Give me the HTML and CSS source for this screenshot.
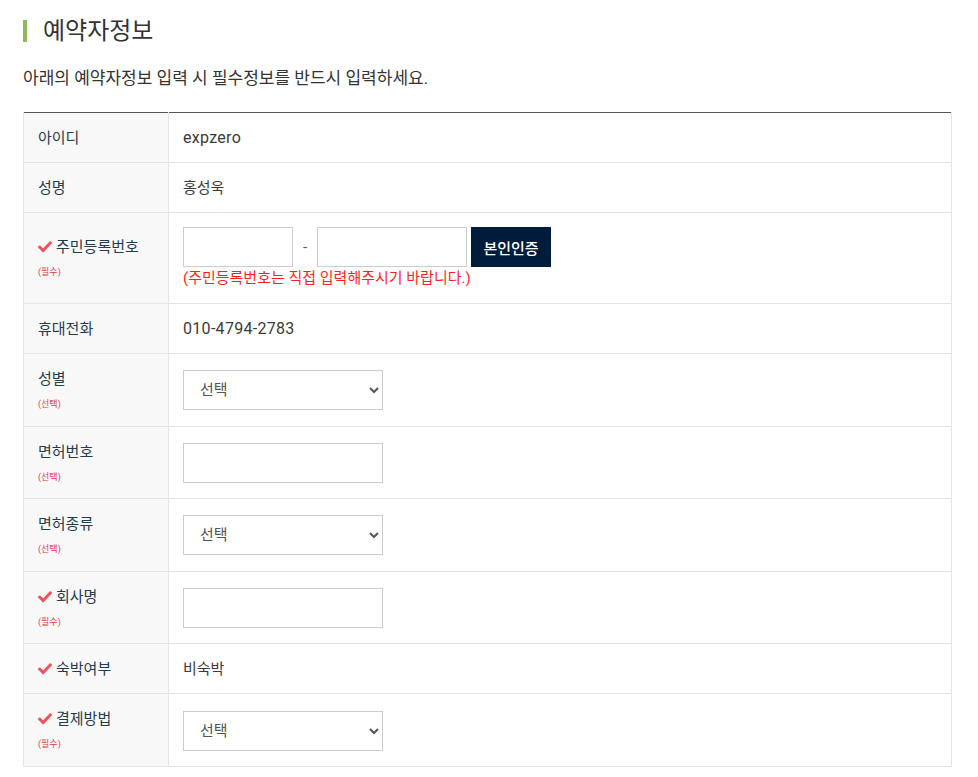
FILE: index.html
```html
<!DOCTYPE html>
<html lang="ko">
<head>
  <meta charset="UTF-8">
  <title>예약자정보</title>
  <link rel="stylesheet" href="styles.css">
</head>
<body>
  <div class="wrap">
    <h2 class="sec-title">예약자정보</h2>
    <p class="sec-desc">아래의 예약자정보 입력 시 필수정보를 반드시 입력하세요.</p>
    <table class="form-table">
      <colgroup>
        <col class="col-th">
        <col>
      </colgroup>
      <tr>
        <th>아이디</th>
        <td><span class="en">expzero</span></td>
      </tr>
      <tr>
        <th>성명</th>
        <td>홍성욱</td>
      </tr>
      <tr>
        <th>
          <span class="req"><svg class="chk" viewBox="0 0 14 12"><path d="M1.6 6 5.2 9.6 12.4 1.8"/></svg>주민등록번호</span>
          <span class="sub">(필수)</span>
        </th>
        <td>
          <div class="jumin">
            <input type="text" class="inp inp-s">
            <span class="dash">-</span>
            <input type="password" class="inp inp-m">
            <button type="button" class="btn-auth">본인인증</button>
          </div>
          <p class="warn">(주민등록번호는 직접 입력해주시기 바랍니다.)</p>
        </td>
      </tr>
      <tr>
        <th>휴대전화</th>
        <td><span class="en">010-4794-2783</span></td>
      </tr>
      <tr>
        <th>성별<span class="sub">(선택)</span></th>
        <td>
          <select class="sel">
            <option>선택</option>
            <option>남</option>
            <option>여</option>
          </select>
        </td>
      </tr>
      <tr>
        <th>면허번호<span class="sub">(선택)</span></th>
        <td><input type="text" class="inp inp-l"></td>
      </tr>
      <tr>
        <th>면허종류<span class="sub">(선택)</span></th>
        <td>
          <select class="sel">
            <option>선택</option>
            <option>1종 보통</option>
            <option>2종 보통</option>
          </select>
        </td>
      </tr>
      <tr>
        <th>
          <span class="req"><svg class="chk" viewBox="0 0 14 12"><path d="M1.6 6 5.2 9.6 12.4 1.8"/></svg>회사명</span>
          <span class="sub">(필수)</span>
        </th>
        <td><input type="text" class="inp inp-l"></td>
      </tr>
      <tr>
        <th><span class="req"><svg class="chk" viewBox="0 0 14 12"><path d="M1.6 6 5.2 9.6 12.4 1.8"/></svg>숙박여부</span></th>
        <td>비숙박</td>
      </tr>
      <tr>
        <th>
          <span class="req"><svg class="chk" viewBox="0 0 14 12"><path d="M1.6 6 5.2 9.6 12.4 1.8"/></svg>결제방법</span>
          <span class="sub">(필수)</span>
        </th>
        <td>
          <select class="sel">
            <option>선택</option>
            <option>현장결제</option>
            <option>계좌이체</option>
          </select>
        </td>
      </tr>
    </table>
  </div>
</body>
</html>
```

FILE: styles.css
```css
body {
  margin: 0;
  padding: 0;
  background-color: #fff;
  color: #333;
  font-family: Roboto, 'Noto Sans CJK KR', sans-serif;
}
.wrap {
  width: 929px;
  margin: 0 0 0 23px;
  padding: 14px 0 11px;
}
.sec-title {
  margin: 6px 0 0;
  padding-left: 16px;
  border-left: 4px solid #8dbb5a;
  height: 22px;
  line-height: 22px;
  font-size: 24px;
  font-weight: 400;
  color: #333;
}
.sec-desc {
  margin: 24px 0 22px;
  font-size: 17px;
  line-height: 24px;
  color: #333;
}
.form-table {
  width: 100%;
  border-collapse: collapse;
  border-top: 1px solid #555;
  font-size: 15px;
}
.col-th {
  width: 145px;
}
.form-table th,
.form-table td {
  border: 1px solid #e4e4e4;
  padding: 14px 14px 13px;
  line-height: 22px;
  vertical-align: middle;
  text-align: left;
}
.form-table tr:first-child th,
.form-table tr:first-child td {
  border-top: 0;
}
.form-table th {
  background-color: #f8f8f8;
  font-weight: 400;
  color: #1f3b4d;
}
.form-table td {
  color: #3a3a3a;
}
.en {
  font-size: 16px;
  letter-spacing: 0.3px;
}
.req {
  display: block;
}
.chk {
  width: 14px;
  height: 12px;
  margin-right: 4px;
  vertical-align: -1px;
  fill: none;
  stroke: #f2525c;
  stroke-width: 3;
  stroke-linecap: round;
  stroke-linejoin: round;
}
.sub {
  display: block;
  margin-top: 6px;
  font-size: 9px;
  line-height: 16.6px;
  color: #e8383f;
}
.jumin {
  display: flex;
  align-items: center;
}
.inp {
  box-sizing: border-box;
  height: 40px;
  border: 1px solid #ccc;
  border-radius: 0;
  padding: 0 10px;
  font-size: 15px;
  font-family: inherit;
  display: block;
}
.inp-s {
  width: 110px;
}
.inp-m {
  width: 150px;
}
.inp-l {
  width: 200px;
}
.dash {
  width: 24px;
  text-align: center;
  color: #555;
}
.btn-auth {
  box-sizing: border-box;
  width: 80px;
  height: 40px;
  margin-left: 4px;
  border: 0;
  background-color: #001c3d;
  color: #fff;
  font-family: inherit;
  font-size: 15px;
  font-weight: 500;
  cursor: pointer;
}
.warn {
  margin: 0;
  line-height: 23px;
  font-size: 15px;
  color: #ff1f1f;
}
.sel {
  box-sizing: border-box;
  width: 200px;
  height: 40px;
  border: 1px solid #ccc;
  border-radius: 0;
  padding: 0 12px;
  background-color: #fff;
  font-family: inherit;
  font-size: 15px;
  color: #555;
  display: block;
}
```
